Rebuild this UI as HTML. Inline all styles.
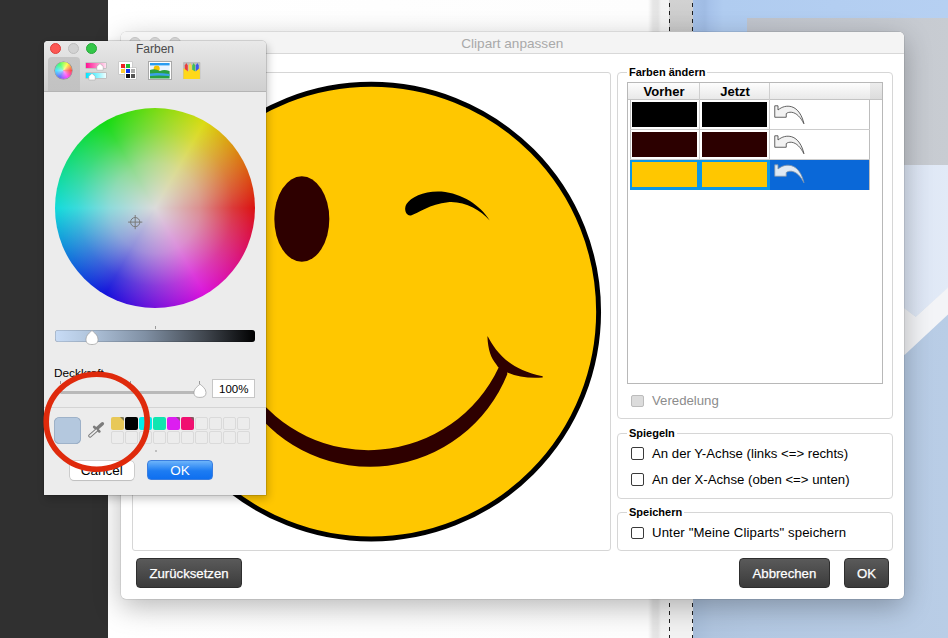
<!DOCTYPE html>
<html><head><meta charset="utf-8">
<style>
*{box-sizing:border-box}
html,body{margin:0;padding:0;width:948px;height:638px;overflow:hidden;font-family:"Liberation Sans",sans-serif;background:#fff}
.a{position:absolute}
/* background */
#bgdark{left:0;top:0;width:108px;height:638px;background:#303030}
#bgpage{left:108px;top:0;width:561px;height:638px;background:linear-gradient(90deg,#fff 0,#fdfdfd 540px,#e6e6e6 545px,#e4e4e4 550px,#f2f2f2 553px,#f4f4f4 561px)}
#dash{left:668.5px;top:0;width:25px;height:638px;background:linear-gradient(180deg,#d2d2d2 0,#c8c8c8 31px,#f2f2f2 32px,#f2f2f2 638px)}
.dl{top:0;width:1.5px;height:638px;background:repeating-linear-gradient(180deg,#1e1e1e 0,#1e1e1e 4px,transparent 4px,transparent 8px)}
#bgblue{left:693px;top:0;width:255px;height:638px;background:linear-gradient(90deg,#a4c0e8 0,#a0bce4 12px,#a6c2ea 16px,#b0ccf0 30px,#b6d0f2 255px)}
#bgblue2{left:693px;top:360px;width:255px;height:278px;background:linear-gradient(90deg,#a7bdd9 0,#b0c5df 20px,#b3c8e2 60px,#b9cde6 255px)}
#bggray{left:746.7px;top:17.8px;width:202px;height:147.2px;background:linear-gradient(90deg,#c0c4cc,#c8ccd2)}
#bglight{left:746px;top:165px;width:202px;height:473px;background:linear-gradient(90deg,#b1c6e1,#b9cde6)}

/* main dialog */
#dlg{left:120.5px;top:31.5px;width:783.5px;height:567.5px;background:#fff;border-radius:5px;box-shadow:0 8px 28px rgba(0,0,0,.28),0 0 0 .5px rgba(0,0,0,.15)}
#dlgtitle{left:0;top:0;width:100%;height:22.5px;background:#f4f4f4;border-bottom:1px solid #d8d8d8;border-radius:5px 5px 0 0}
#dlgtitle .t{left:0;width:100%;top:4.5px;text-align:center;font-size:13.6px;color:#a9a9a9}
.tl{width:12px;height:12px;border-radius:50%;background:#d6d6d6;border:.5px solid #c4c4c4;top:5px}

#preview{left:132px;top:71.8px;width:478.5px;height:479.5px;border:1px solid #d6d6d6;border-radius:3px}
.grp{border:1px solid #d6d6d6;border-radius:4px}
.glab{font-size:11px;font-weight:bold;color:#000;background:#fff;padding:0 2px}
.cb{width:12.5px;height:12.5px;border:1px solid #3a3a3a;border-radius:2px;background:#fff}
.hd{top:1px;height:16px;text-align:center;font-size:13px;font-weight:bold;line-height:16px}
.lbl{font-size:13.2px;color:#000;white-space:nowrap}
.btn{background:linear-gradient(180deg,#5a5a5a,#3b3b3b);border-radius:4px;color:#fff;font-size:13.2px;text-align:center;line-height:30.5px;border:.5px solid #2e2e2e;-webkit-text-stroke:.25px #fff}
</style></head><body>
<div id="bgdark" class="a"></div>
<div id="bgpage" class="a"></div>
<div id="dash" class="a"></div><div class="a dl" style="left:668.5px;top:3px"></div><div class="a dl" style="left:691.5px;top:3px"></div>
<div id="bgblue" class="a"></div>
<div id="bggray" class="a"></div>
<div id="bglight" class="a"></div><div id="bgblue2" class="a"></div>
<svg class="a" style="left:746px;top:165px" width="202" height="473" viewBox="746 165 202 473"><defs><linearGradient id="lg1" x1="0" y1="0" x2="1" y2="0"><stop offset="0" stop-color="#c9d7ec"/><stop offset="1" stop-color="#e2eaf7"/></linearGradient></defs><polygon points="746,165 948,165 948,288 915.7,316.7 880,291 746,291" fill="url(#lg1)"/><polygon points="880,290 915.7,316.7 948,287.5 948,314.5 904.5,355 880,330" fill="#f3f4f7"/></svg>

<div id="dlg" class="a">
  <div id="dlgtitle" class="a">
    <div class="a tl" style="left:8.5px"></div>
    <div class="a tl" style="left:28.5px"></div>
    <div class="a tl" style="left:48.5px"></div>
    <div class="a t">Clipart anpassen</div>
  </div>
</div>
<div id="preview" class="a"></div>
<svg class="a" style="left:0;top:0" width="948" height="638" viewBox="0 0 948 638">
  <circle cx="371.2" cy="311.65" r="227.4" fill="#ffc700" stroke="#000" stroke-width="4.9"/>
  <ellipse cx="301.8" cy="219" rx="27.5" ry="42.8" fill="#2e0000"/>
  <path d="M489.7,220.4 C480,205 462,193.5 441.5,191.6 C425,190.5 411,197 406.5,204 C403,210 407,216.5 411,215.5 C418,213 430,204 448,202.2 C465,201 480,210 489.7,220.4 Z" fill="#000"/>
  <path d="M250,388.24 A144.08,144.08 0 0 0 498.8,367.2 L501,364.5 L507,370 L507.3,374.2 A147.84,147.84 0 0 1 250,405 Z" fill="#2e0000"/>
  <path d="M487.8,336.5 C495,349 506,369 542.7,376.3 L542.7,377.4 C525,379 508,375 498,367 L496,364 C491,358 488,350 487.4,336.6 Z" fill="#2e0000"/>
</svg>
<!-- Farben aendern -->
<div class="a grp" style="left:617px;top:72.3px;width:275.5px;height:347.2px"></div>
<div class="a glab" style="left:627px;top:66px">Farben ändern</div>
<div class="a" id="tbl" style="left:627px;top:82px;width:256px;height:302px;border:1px solid #b8b8b8;background:#fff">
  <div class="a" style="left:0;top:0;width:254px;height:17px;background:linear-gradient(180deg,#fdfdfd,#e9e9e9);border-bottom:1px solid #c4c4c4"></div>
  <div class="a" style="left:241.5px;top:0;width:12.5px;height:17px;background:linear-gradient(180deg,#ececec,#dcdcdc);border-bottom:1px solid #c4c4c4"></div>
  <div class="a" style="left:71.1px;top:0;width:1px;height:17px;background:#cfcfcf"></div>
  <div class="a" style="left:140.9px;top:0;width:1px;height:17px;background:#cfcfcf"></div>
  <div class="a hd" style="left:0;width:72px">Vorher</div>
  <div class="a hd" style="left:72px;width:70px">Jetzt</div>
  <!-- rows -->
  <div class="a" style="left:1.5px;top:17px;width:240.5px;height:90px;border-left:1px solid #bdbdbd;border-right:1px solid #bdbdbd"></div>
  <div class="a" style="left:1.5px;top:45.8px;width:240.5px;height:1px;background:#cdcdcd"></div>
  <div class="a" style="left:1.5px;top:75.8px;width:240.5px;height:1px;background:#cdcdcd"></div>
  <div class="a" style="left:71.1px;top:17px;width:1px;height:90px;background:#cdcdcd"></div>
  <div class="a" style="left:140.9px;top:17px;width:1px;height:90px;background:#cdcdcd"></div>
  <div class="a" style="left:4px;top:19px;width:65px;height:25px;background:#000"></div>
  <div class="a" style="left:74px;top:19px;width:65px;height:25px;background:#000"></div>
  <div class="a" style="left:4px;top:49px;width:65px;height:25px;background:#2c0000"></div>
  <div class="a" style="left:74px;top:49px;width:65px;height:25px;background:#2c0000"></div>
  <div class="a" style="left:141.8px;top:76.7px;width:99.7px;height:30px;background:#0a68d8"></div>
  <div class="a" style="left:2px;top:76.7px;width:70px;height:30px;background:#0c96e6"></div>
  <div class="a" style="left:72px;top:76.7px;width:69.5px;height:30px;background:#0c96e6"></div>
  <div class="a" style="left:4px;top:79px;width:65px;height:25px;background:#ffc700"></div>
  <div class="a" style="left:74px;top:79px;width:65px;height:25px;background:#ffc700"></div>
  <svg class="a" style="left:145.9px;top:21.6px" width="32.5" height="23" viewBox="0 0 34 24"><path d="M0.8,0.8 L4.2,0.8 L4.2,5.2 C8.5,1.6 13.5,0.4 18.5,1.8 C25,3.8 29.5,11 31.3,19.6 C28,13 23.5,8.2 18.5,7.6 C16,7.3 13.8,8 12.8,9 L12.8,12.8 L0.8,12.8 Z" fill="#f2f2f2" stroke="#4a4a4a" stroke-width="0.9" stroke-linejoin="miter"/></svg><svg class="a" style="left:145.9px;top:51.6px" width="32.5" height="23" viewBox="0 0 34 24"><path d="M0.8,0.8 L4.2,0.8 L4.2,5.2 C8.5,1.6 13.5,0.4 18.5,1.8 C25,3.8 29.5,11 31.3,19.6 C28,13 23.5,8.2 18.5,7.6 C16,7.3 13.8,8 12.8,9 L12.8,12.8 L0.8,12.8 Z" fill="#f2f2f2" stroke="#4a4a4a" stroke-width="0.9" stroke-linejoin="miter"/></svg><svg class="a" style="left:145.9px;top:81.3px" width="32.5" height="23" viewBox="0 0 34 24"><path d="M0.8,0.8 L4.2,0.8 L4.2,5.2 C8.5,1.6 13.5,0.4 18.5,1.8 C25,3.8 29.5,11 31.3,19.6 C28,13 23.5,8.2 18.5,7.6 C16,7.3 13.8,8 12.8,9 L12.8,12.8 L0.8,12.8 Z" fill="#dfe8f3" stroke="#7e93ab" stroke-width="0.9" stroke-linejoin="miter"/></svg>
</div>
<div class="a cb" style="left:631px;top:394.5px;background:#dcdcdc;border-color:#bcbcbc"></div>
<div class="a lbl" style="left:652px;top:392.5px;color:#8c8c8c">Veredelung</div>
<!-- Spiegeln -->
<div class="a grp" style="left:617px;top:432.8px;width:275.5px;height:65.8px"></div>
<div class="a glab" style="left:627px;top:427px">Spiegeln</div>
<div class="a cb" style="left:631px;top:447px"></div>
<div class="a lbl" style="left:652px;top:445.5px">An der Y-Achse (links &lt;=&gt; rechts)</div>
<div class="a cb" style="left:631px;top:473px"></div>
<div class="a lbl" style="left:652px;top:471.5px">An der X-Achse (oben &lt;=&gt; unten)</div>
<!-- Speichern -->
<div class="a grp" style="left:617px;top:511.8px;width:275.5px;height:39.7px"></div>
<div class="a glab" style="left:627px;top:506px">Speichern</div>
<div class="a cb" style="left:631px;top:526.5px"></div>
<div class="a lbl" style="left:652px;top:524.5px;letter-spacing:.12px">Unter "Meine Cliparts" speichern</div>
<!-- buttons -->
<div class="a btn" style="left:136.3px;top:558px;width:105.5px;height:29.7px">Zurücksetzen</div>
<div class="a btn" style="left:739px;top:558px;width:90.8px;height:29.7px">Abbrechen</div>
<div class="a btn" style="left:844.3px;top:558px;width:44.5px;height:29.7px">OK</div>
<!-- Farben panel -->
<div class="a" id="fp" style="left:44px;top:40.5px;width:222px;height:454px;background:#ececec;border-radius:4px 4px 0 0;box-shadow:0 0 0 .5px rgba(0,0,0,.25),2px 4px 8px rgba(0,0,0,.22)"></div>
<div class="a" style="left:44px;top:40.5px;width:222px;height:51px;background:linear-gradient(180deg,#e9e9e9 0,#dedede 40%,#cfcfcf 100%);border-radius:4px 4px 0 0;border-bottom:1px solid #b4b4b4"></div>
<div class="a" style="left:50px;top:43.1px;width:11.2px;height:11.2px;border-radius:50%;background:#fc5753;border:.5px solid #df3d39"></div>
<div class="a" style="left:67.9px;top:43.1px;width:11.2px;height:11.2px;border-radius:50%;background:#d2d2d2;border:.5px solid #bdbdbd"></div>
<div class="a" style="left:86px;top:43.1px;width:11.2px;height:11.2px;border-radius:50%;background:#33c748;border:.5px solid #27a83a"></div>
<div class="a m" style="left:44px;top:42px;width:222px;text-align:center;font-size:12px;color:#4a4a4a">Farben</div>
<div class="a" style="left:48px;top:57px;width:32px;height:34px;background:linear-gradient(180deg,#c6c6c6,#c2c2c2);border-radius:4px 4px 0 0"></div>
<div class="a" style="left:54.8px;top:61.5px;width:17.6px;height:17.6px;border-radius:50%;background:radial-gradient(circle,rgba(255,255,255,.55) 0,rgba(255,255,255,0) 70%),conic-gradient(from 90deg,#ff4040,#ff40ff,#6060ff,#40e0ff,#40ff60,#ffff40,#ff4040);box-shadow:0 0 0 .6px #8a8a8a"></div>
<!-- slider icon -->
<div class="a" style="left:85.7px;top:62.9px;width:20.3px;height:5px;background:linear-gradient(90deg,#ff1493,#ffe0f0);box-shadow:0 0 0 .5px #aaa"></div>
<div class="a" style="left:85.7px;top:72.8px;width:20.3px;height:5px;background:linear-gradient(90deg,#00e5ff,#f0ffff);box-shadow:0 0 0 .5px #aaa"></div>
<svg class="a" style="left:85px;top:62px" width="22" height="20" viewBox="0 0 22 20"><path d="M15,1.6 L18.2,4.4 L18.2,8.2 L11.8,8.2 L11.8,4.4 Z" fill="#fff" stroke="#a0a0a0" stroke-width=".5" stroke-linejoin="round"/><path d="M7,11.4 L10.2,14.2 L10.2,18 L3.8,18 L3.8,14.2 Z" fill="#fff" stroke="#a0a0a0" stroke-width=".5" stroke-linejoin="round"/></svg>
<!-- palette icon -->
<div class="a" style="left:119.4px;top:62.1px;width:12.5px;height:12.2px;background:#fff;box-shadow:0 0 0 .5px #bbb"></div>
<div class="a" style="left:124.8px;top:67.7px;width:11.4px;height:11.6px;background:#fff;box-shadow:0 0 0 .5px #bbb"></div>
<div class="a" style="left:121.4px;top:64.1px;width:3.9px;height:3.8px;background:#ee2222"></div>
<div class="a" style="left:125.8px;top:64.1px;width:3.9px;height:3.8px;background:#22bb33"></div>
<div class="a" style="left:121.4px;top:68.9px;width:3.9px;height:3.9px;background:#ffcc33"></div>
<div class="a" style="left:125.8px;top:68.9px;width:3.9px;height:3.9px;background:#1133ee"></div>
<div class="a" style="left:130.8px;top:68.9px;width:3.9px;height:3.9px;background:#aaaaaa"></div>
<div class="a" style="left:125.8px;top:74.3px;width:3.9px;height:3.5px;background:#111"></div>
<div class="a" style="left:130.8px;top:74.3px;width:3.9px;height:3.5px;background:#555"></div>
<!-- image icon -->
<div class="a" style="left:148.1px;top:61.3px;width:23.7px;height:19.2px;background:#fff;border:1px solid #a8a8a8"></div>
<svg class="a" style="left:150.3px;top:63.1px" width="19.6" height="15.5" viewBox="0 0 19.6 15.5"><rect width="19.6" height="15.5" fill="#eaf4ff"/><rect width="19.6" height="2.4" fill="#2a9cf0"/><circle cx="6.7" cy="5.6" r="3" fill="#f5c400"/><path d="M0,7 Q5,5 10,8 Q14,6 19.6,8 L19.6,15.5 L0,15.5 Z" fill="#2aa040"/><path d="M0,10.5 Q8,9.5 19.6,11 L19.6,13 Q8,12 0,13 Z" fill="#3aa0e8"/></svg>
<!-- crayons -->
<svg class="a" style="left:183.2px;top:62px" width="17.4" height="17.4" viewBox="0 0 17.4 17.4"><rect width="17.4" height="17.4" rx="1" fill="#bdbdbd"/><path d="M1.8,10 L1.8,3.6 L3.3,1 L4.8,3.6 L4.8,10Z" fill="#ec3c3c"/><path d="M5.7,10 L5.7,3.6 L7.2,1 L8.7,3.6 L8.7,10Z" fill="#f4d84a"/><path d="M9.2,10 L9.2,3.6 L10.7,1 L12.2,3.6 L12.2,10Z" fill="#44c058"/><path d="M12.8,10 L12.8,3.6 L14.3,1 L15.8,3.6 L15.8,10Z" fill="#3c58ec"/><path d="M0.5,6 L5,9.5 L8.7,7.5 L12.4,9.5 L16.9,6 L16.9,16.9 L0.5,16.9 Z" fill="#ffd81a"/></svg>

<!-- color wheel -->
<div class="a" style="left:55.3px;top:108.2px;width:200px;height:200px;border-radius:50%;background:radial-gradient(circle closest-side,rgba(219,219,219,1) 0,rgba(219,219,219,.62) 45%,rgba(219,219,219,.2) 78%,rgba(219,219,219,0) 100%),conic-gradient(from 90deg,#db1111 0deg,#db1133 10deg,#db1154 20deg,#db1176 30deg,#db1198 40deg,#db11b9 50deg,#db11db 60deg,#b911db 70deg,#9811db 80deg,#7611db 90deg,#5411db 100deg,#3311db 110deg,#1111db 120deg,#1133db 130deg,#1154db 140deg,#1176db 150deg,#1198db 160deg,#11b9db 170deg,#11dbdb 180deg,#11dbb9 190deg,#11db98 200deg,#11db76 210deg,#11db54 220deg,#11db33 230deg,#11db11 240deg,#33db11 250deg,#54db11 260deg,#76db11 270deg,#98db11 280deg,#b9db11 290deg,#dbdb11 300deg,#dbb911 310deg,#db9811 320deg,#db7611 330deg,#db5411 340deg,#db3311 350deg,#db1111 360deg)"></div>
<svg class="a" style="left:125px;top:211.5px" width="20" height="20" viewBox="0 0 20 20"><circle cx="10.2" cy="10.1" r="4.6" fill="none" stroke="#7a7a7a" stroke-width="1"/><path d="M10.2,3 V17.2 M3.1,10.1 H17.3" stroke="#7a7a7a" stroke-width="1"/></svg>
<!-- brightness slider -->
<div class="a" style="left:155px;top:325.5px;width:1px;height:3px;background:#9a9a9a"></div>
<div class="a" style="left:55px;top:330px;width:199.5px;height:11.5px;border-radius:3px;background:linear-gradient(90deg,#c8dcf6 0,#b4c8e0 15%,#8090a4 45%,#40464e 75%,#000 100%);box-shadow:inset 0 0 0 .6px rgba(0,0,0,.25)"></div>
<svg class="a" style="left:84px;top:329px" width="16" height="17" viewBox="0 0 16 17"><path d="M8,1.5 C10,3.5 14,6 14,10.5 C14,14 12,15.5 8,15.5 C4,15.5 2,14 2,10.5 C2,6 6,3.5 8,1.5 Z" fill="#fff" stroke="#9a9a9a" stroke-width=".7"/></svg>
<!-- Deckkraft -->
<div class="a m" style="left:54px;top:365.5px;font-size:11.8px;color:#000">Deckkraft</div>
<div class="a" style="left:59.5px;top:391.2px;width:141px;height:3px;border-radius:1.5px;background:#b9b9b9"></div>
<div class="a" style="left:60px;top:380.5px;width:1px;height:3px;background:#9a9a9a"></div>
<div class="a" style="left:130px;top:380.5px;width:1px;height:3px;background:#9a9a9a"></div>
<div class="a" style="left:199px;top:380.5px;width:1px;height:3px;background:#9a9a9a"></div>
<svg class="a" style="left:191.5px;top:383px" width="16" height="16" viewBox="0 0 16 16"><path d="M8,1.2 C10,3 14,5.5 14,9.5 C14,13 12,14.4 8,14.4 C4,14.4 2,13 2,9.5 C2,5.5 6,3 8,1.2 Z" fill="#fff" stroke="#9a9a9a" stroke-width=".7"/></svg>
<div class="a m" style="left:212.2px;top:379px;width:43.2px;height:18.5px;background:#fff;border:1px solid #c6c6c6;font-size:11.5px;text-align:center;line-height:18px;color:#000">100%</div>
<div class="a" style="left:44px;top:406.8px;width:222px;height:1px;background:#d4d4d4"></div>
<!-- swatches -->
<div class="a" style="left:54px;top:417px;width:27px;height:27px;border-radius:5.5px;background:#b4c8de;box-shadow:inset 0 0 0 .8px #97abc2"></div>
<svg class="a" style="left:85px;top:418px" width="20" height="20" viewBox="0 0 20 20"><line x1="17.4" y1="5.7" x2="12" y2="10.5" stroke="#7c7c7c" stroke-width="3.4" stroke-linecap="round"/><line x1="9.2" y1="8.9" x2="14.4" y2="13.4" stroke="#7c7c7c" stroke-width="2.6" stroke-linecap="round"/><line x1="11" y1="12.6" x2="5" y2="17.8" stroke="#7c7c7c" stroke-width="3.6" stroke-linecap="round"/><line x1="11.3" y1="12.3" x2="5" y2="17.8" stroke="#ececec" stroke-width="1.7" stroke-linecap="round"/></svg>
<div class="a" style="left:111.0px;top:417.0px;width:13px;height:13px;border-radius:2px;background:#e8c858"></div><div class="a" style="left:125.0px;top:417.0px;width:13px;height:13px;border-radius:2px;background:#000000"></div><div class="a" style="left:139.1px;top:417.0px;width:13px;height:13px;border-radius:2px;background:#00ecec"></div><div class="a" style="left:153.2px;top:417.0px;width:13px;height:13px;border-radius:2px;background:#10e6b0"></div><div class="a" style="left:167.2px;top:417.0px;width:13px;height:13px;border-radius:2px;background:#dc1ef0"></div><div class="a" style="left:181.2px;top:417.0px;width:13px;height:13px;border-radius:2px;background:#f01070"></div><div class="a" style="left:195.3px;top:417.0px;width:13px;height:13px;border-radius:2px;border:1px solid #dadada"></div><div class="a" style="left:209.4px;top:417.0px;width:13px;height:13px;border-radius:2px;border:1px solid #dadada"></div><div class="a" style="left:223.4px;top:417.0px;width:13px;height:13px;border-radius:2px;border:1px solid #dadada"></div><div class="a" style="left:237.4px;top:417.0px;width:13px;height:13px;border-radius:2px;border:1px solid #dadada"></div><div class="a" style="left:111.0px;top:431.2px;width:13px;height:13px;border-radius:2px;border:1px solid #dadada"></div><div class="a" style="left:125.0px;top:431.2px;width:13px;height:13px;border-radius:2px;border:1px solid #dadada"></div><div class="a" style="left:139.1px;top:431.2px;width:13px;height:13px;border-radius:2px;border:1px solid #dadada"></div><div class="a" style="left:153.2px;top:431.2px;width:13px;height:13px;border-radius:2px;border:1px solid #dadada"></div><div class="a" style="left:167.2px;top:431.2px;width:13px;height:13px;border-radius:2px;border:1px solid #dadada"></div><div class="a" style="left:181.2px;top:431.2px;width:13px;height:13px;border-radius:2px;border:1px solid #dadada"></div><div class="a" style="left:195.3px;top:431.2px;width:13px;height:13px;border-radius:2px;border:1px solid #dadada"></div><div class="a" style="left:209.4px;top:431.2px;width:13px;height:13px;border-radius:2px;border:1px solid #dadada"></div><div class="a" style="left:223.4px;top:431.2px;width:13px;height:13px;border-radius:2px;border:1px solid #dadada"></div><div class="a" style="left:237.4px;top:431.2px;width:13px;height:13px;border-radius:2px;border:1px solid #dadada"></div>
<svg class="a" style="left:119.5px;top:417px" width="4.5" height="4.5" viewBox="0 0 4.5 4.5"><path d="M0,0 L2.5,0 Q4.5,0 4.5,2 L4.5,4.5 Z" fill="#6a6a5a" opacity=".8"/></svg><svg class="a" style="left:175.7px;top:417px" width="4.5" height="4.5" viewBox="0 0 4.5 4.5"><path d="M0,0 L2.5,0 Q4.5,0 4.5,2 L4.5,4.5 Z" fill="#6a6a5a" opacity=".8"/></svg><svg class="a" style="left:189.8px;top:417px" width="4.5" height="4.5" viewBox="0 0 4.5 4.5"><path d="M0,0 L2.5,0 Q4.5,0 4.5,2 L4.5,4.5 Z" fill="#6a6a5a" opacity=".8"/></svg><div class="a" style="left:154.5px;top:450.3px;width:2.2px;height:2.2px;background:#b0b0b0;border-radius:50%"></div>
<div class="a m" style="left:69.6px;top:460.6px;width:64.5px;height:19.6px;background:#fff;border-radius:4px;box-shadow:0 0 0 .6px #b8b8b8,0 .8px .8px rgba(0,0,0,.15);font-size:13.5px;line-height:20px;text-align:center;color:#000">Cancel</div>
<div class="a m" style="left:147.2px;top:460.2px;width:65.5px;height:20.2px;background:linear-gradient(180deg,#6db4fa,#1d7cf2 55%,#0e6ff0);border-radius:4px;border:.6px solid #3a7ee0;font-size:13.5px;line-height:19px;text-align:center;color:#fff">OK</div>
<!-- red circle -->
<svg class="a" style="left:0;top:0" width="948" height="638" viewBox="0 0 948 638"><ellipse cx="96.7" cy="421.7" rx="50.5" ry="47.5" fill="none" stroke="#df2a0c" stroke-width="5.6"/></svg>
</body></html>
